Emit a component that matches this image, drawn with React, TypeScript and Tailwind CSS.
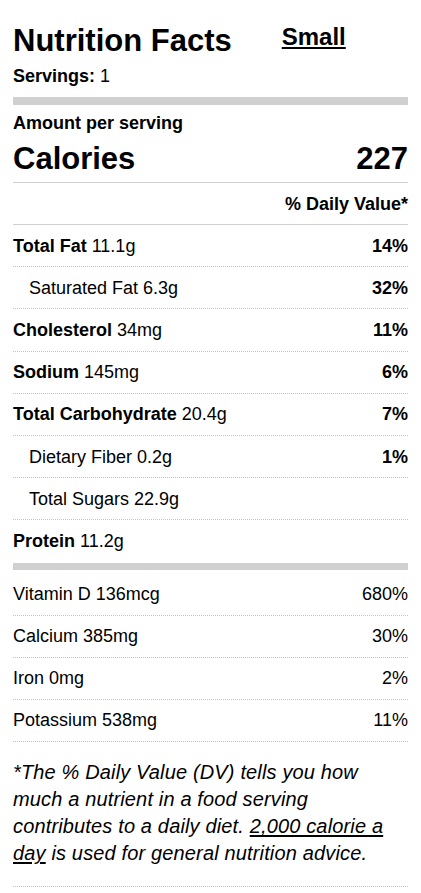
import React from "react";

type Nutrient = {
  name: string;
  amount: string;
  dv?: string;
  sub?: boolean;
};

const macros: Nutrient[] = [
  { name: "Total Fat", amount: "11.1g", dv: "14%" },
  { name: "Saturated Fat", amount: "6.3g", dv: "32%", sub: true },
  { name: "Cholesterol", amount: "34mg", dv: "11%" },
  { name: "Sodium", amount: "145mg", dv: "6%" },
  { name: "Total Carbohydrate", amount: "20.4g", dv: "7%" },
  { name: "Dietary Fiber", amount: "0.2g", dv: "1%", sub: true },
  { name: "Total Sugars", amount: "22.9g", sub: true },
  { name: "Protein", amount: "11.2g" },
];

const micros = [
  { name: "Vitamin D", amount: "136mcg", dv: "680%" },
  { name: "Calcium", amount: "385mg", dv: "30%" },
  { name: "Iron", amount: "0mg", dv: "2%" },
  { name: "Potassium", amount: "538mg", dv: "11%" },
];

const MacroRow = ({ item, last }: { item: Nutrient; last: boolean }) => (
  <div
    className={`flex h-[42.2px] items-center justify-between text-[18px] leading-[22px] ${
      last ? "" : "border-b border-dotted border-[#c4c4c4]"
    }`}
  >
    <p className={item.sub ? "pl-[16px]" : ""}>
      {item.sub ? (
        <span>{item.name}</span>
      ) : (
        <span className="font-bold">{item.name}</span>
      )}{" "}
      {item.amount}
    </p>
    {item.dv && <p className="font-bold">{item.dv}</p>}
  </div>
);

export default function App() {
  return (
    <div className="min-h-screen bg-white px-[13px] pt-[23px] text-black font-['Liberation_Sans',Arial,sans-serif]">
      {/* Header */}
      <div className="flex items-start">
        <h1 className="text-[31px] font-bold leading-[36px]">Nutrition Facts</h1>
        <span className="ml-[50px] text-[24px] font-bold leading-[28px] underline decoration-2 underline-offset-[2px]">
          Small
        </span>
      </div>
      <p className="mt-[6px] text-[18px] leading-[22px]">
        <span className="font-bold">Servings:</span> 1
      </p>

      <div className="mt-[10px] h-[8px] bg-[#d0d0d0]" />

      <p className="mt-[7px] text-[18px] font-bold leading-[22px]">Amount per serving</p>
      <div className="mt-[7px] flex justify-between border-b border-[#d0d0d0] pb-[5px] text-[31px] font-bold leading-[36px]">
        <span>Calories</span>
        <span>227</span>
      </div>

      <div className="flex h-[42px] items-center justify-end border-b border-[#d0d0d0] pt-[1px] text-[18px] font-bold leading-[22px]">
        % Daily Value*
      </div>

      {macros.map((m, i) => (
        <MacroRow key={m.name} item={m} last={i === macros.length - 1} />
      ))}

      <div className="h-[7px] bg-[#d0d0d0]" />

      {micros.map((m, i) => (
        <div
          key={m.name}
          className={`flex items-center justify-between border-b border-dotted border-[#c4c4c4] text-[18px] leading-[22px] ${
            i === 0 ? "h-[46px] pt-[4px]" : "h-[42px]"
          }`}
        >
          <p>
            {m.name} {m.amount}
          </p>
          <p>{m.dv}</p>
        </div>
      ))}

      {/* Footnote */}
      <p className="border-b border-dotted border-[#c4c4c4] pt-[17px] pb-[18px] text-[20px] italic leading-[27.33px] tracking-[0.15px] whitespace-nowrap">
        *The % Daily Value (DV) tells you how
        <br />
        much a nutrient in a food serving
        <br />
        contributes to a daily diet.{" "}
        <span className="underline underline-offset-2">2,000 calorie a</span>
        <br />
        <span className="underline underline-offset-2">day</span> is used for general nutrition advice.
      </p>
    </div>
  );
}
